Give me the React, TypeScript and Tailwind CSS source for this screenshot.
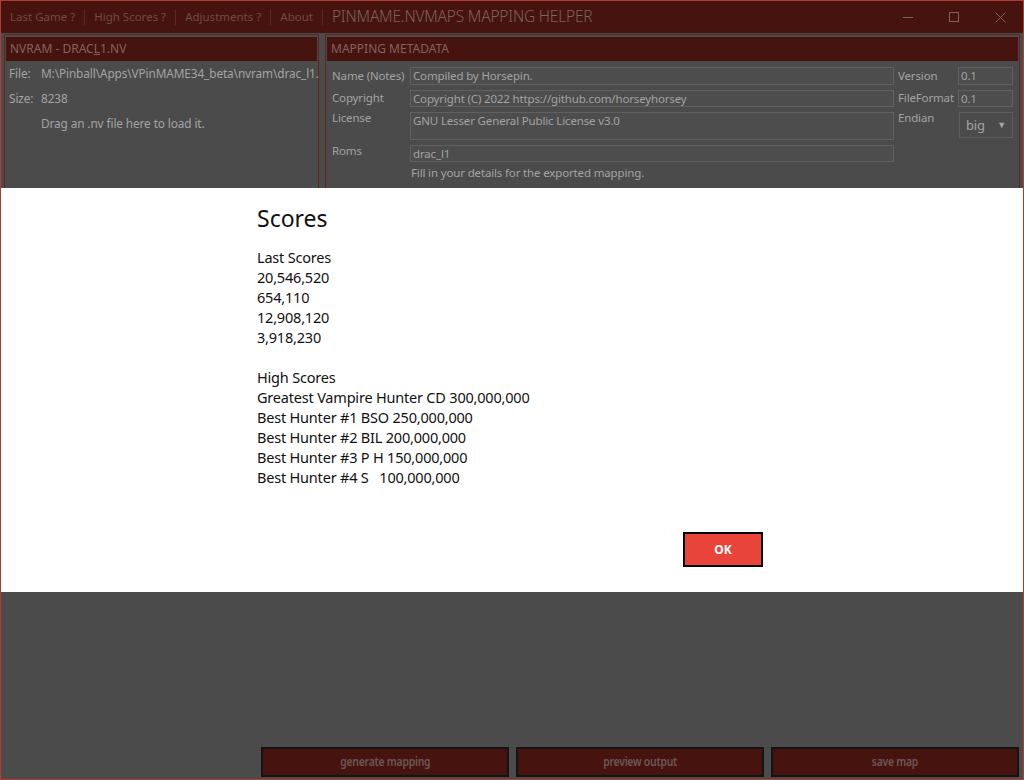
import React from "react";

const seg = { fontFamily: '"Noto Sans", "Open Sans", sans-serif' };

function Input({ value, h = "h-[18px]" }: { value: string; h?: string }) {
  return (
    <div className={`${h} border border-[#606060] bg-[#4d4d4d] px-[2px] text-[11.5px] leading-[15px] tracking-[-0.15px] text-[#a3a3a3] overflow-hidden whitespace-nowrap`}>
      {value}
    </div>
  );
}

export default function App() {
  return (
    <div
      className="relative w-[1024px] h-[780px] overflow-hidden border border-[#b23c2f] bg-[#4b4b4b] flex flex-col"
      style={seg}
    >
      {/* title bar */}
      <div className="h-[32px] shrink-0 bg-[#47130f] flex items-center text-[11.5px] text-[#6e4c48]">
        <div className="flex items-center pl-[9px]">
          <span>Last Game ?</span>
          <span className="mx-[9px] h-[16px] w-px bg-[#5c2a25]" />
          <span>High Scores ?</span>
          <span className="mx-[9px] h-[16px] w-px bg-[#5c2a25]" />
          <span>Adjustments ?</span>
          <span className="mx-[9px] h-[16px] w-px bg-[#5c2a25]" />
          <span>About</span>
          <span className="mx-[9px] h-[16px] w-px bg-[#5c2a25]" />
        </div>
        <span className="text-[15.5px] tracking-[-0.2px] text-[#7a6462] font-light">PINMAME.NVMAPS MAPPING HELPER</span>
        <div className="ml-auto flex items-center text-[#7a6462]">
          <div className="w-[46px] flex justify-center">
            <div className="w-[10px] h-px bg-[#7a6462]" />
          </div>
          <div className="w-[46px] flex justify-center">
            <div className="w-[10px] h-[10px] border border-[#7a6462]" />
          </div>
          <div className="w-[46px] flex justify-center">
            <svg width="11" height="11" viewBox="0 0 11 11">
              <path d="M0.5 0.5 L10.5 10.5 M10.5 0.5 L0.5 10.5" stroke="#7a6462" strokeWidth="1" />
            </svg>
          </div>
        </div>
      </div>

      {/* panels */}
      <div className="flex gap-[6px] px-[3px] pt-[1px] shrink-0">
        <div className="w-[315px] h-[155px] border border-[#5e2520] bg-[#4b4b4b] flex flex-col">
          <div className="h-[24px] mx-[1px] mt-[2px] bg-[#47130f] flex items-center pl-[4px] text-[12px] text-[#86625e]">
            NVRAM - DRAC<span className="underline">L</span>1.NV
          </div>
          <div className="text-[11.8px] tracking-[-0.1px] text-[#a3a3a3] pl-[4px] pt-[4px] leading-[16px]">
            <div className="flex"><span className="w-[32px] shrink-0">File:</span><span className="whitespace-nowrap">M:\Pinball\Apps\VPinMAME34_beta\nvram\drac_l1.</span></div>
            <div className="flex mt-[9px]"><span className="w-[32px]">Size:</span><span>8238</span></div>
            <div className="pl-[32px] mt-[9px]">Drag an .nv file here to load it.</div>
          </div>
        </div>
        <div className="flex-1 h-[155px] border border-[#5e2520] bg-[#4b4b4b] flex flex-col">
          <div className="h-[24px] mx-[1px] mt-[2px] bg-[#47130f] flex items-center pl-[4px] text-[12px] text-[#86625e]">
            MAPPING METADATA
          </div>
          <div className="flex text-[11.5px] tracking-[-0.15px] text-[#a3a3a3] pt-[6px] pl-[6px] pr-[6px]">
            <div className="w-[78px] leading-[15px]">
              <div className="h-[23px] pt-[1px]">Name (Notes)</div>
              <div className="h-[21px]">Copyright</div>
              <div className="h-[32px] -mt-[1px]">License</div>
              <div className="h-[18px] pt-[1px]">Roms</div>
            </div>
            <div className="w-[484px] flex flex-col gap-[5px]">
              <Input value="Compiled by Horsepin." />
              <Input value="Copyright (C) 2022 https://github.com/horseyhorsey" h="h-[17px]" />
              <Input value="GNU Lesser General Public License v3.0" h="h-[28px]" />
              <Input value="drac_l1" h="h-[17px]" />
              <div className="leading-[15px] pl-[1px] -mt-[2px]">Fill in your details for the exported mapping.</div>
            </div>
            <div className="ml-[4px] w-[60px] leading-[15px]">
              <div className="h-[23px] pt-[1px]">Version</div>
              <div className="h-[21px]">FileFormat</div>
              <div className="-mt-[1px]">Endian</div>
            </div>
            <div className="w-[55px] flex flex-col gap-[5px]">
              <Input value="0.1" />
              <Input value="0.1" h="h-[17px]" />
              <div className="h-[26px] ml-[1px] border border-[#5e5e5e] flex items-center justify-between px-[6px] text-[13px]">
                <span className="pt-[2px]">big</span>
                <span className="text-[9px]">▼</span>
              </div>
            </div>
          </div>
        </div>
      </div>

      <div className="flex-1" />

      {/* bottom buttons */}
      <div className="flex justify-end gap-[7px] pr-[4px] pb-[2px] shrink-0">
        {["generate mapping", "preview output", "save map"].map((t) => (
          <div
            key={t}
            className="w-[248px] h-[30px] border-2 border-[#141414] bg-[#47130f] flex items-center justify-center text-[13px] font-semibold text-[#6c5855]"
          >
            <span className="inline-block scale-x-[0.8] tracking-[-0.3px]">{t}</span>
          </div>
        ))}
      </div>

      {/* modal */}
      <div className="absolute left-0 right-0 top-[187px] h-[404px] bg-white">
        <div className="pl-[256px] pt-[14px] text-[#111]">
          <div className="text-[23px] leading-[32px]">Scores</div>
          <div className="mt-[13px] text-[14.5px] leading-[20px] tracking-[-0.2px]">
            <div>Last Scores</div>
            <div>20,546,520</div>
            <div>654,110</div>
            <div>12,908,120</div>
            <div>3,918,230</div>
            <div>&nbsp;</div>
            <div>High Scores</div>
            <div>Greatest Vampire Hunter CD 300,000,000</div>
            <div>Best Hunter #1 BSO 250,000,000</div>
            <div>Best Hunter #2 BIL 200,000,000</div>
            <div>Best Hunter #3 P H 150,000,000</div>
            <div className="whitespace-pre">Best Hunter #4 S   100,000,000</div>
          </div>
        </div>
        <div className="absolute left-[682px] top-[344px] w-[80px] h-[35px] border-2 border-black bg-[#e8443a] flex items-center justify-center text-white text-[12px] font-bold">
          OK
        </div>
      </div>
    </div>
  );
}
